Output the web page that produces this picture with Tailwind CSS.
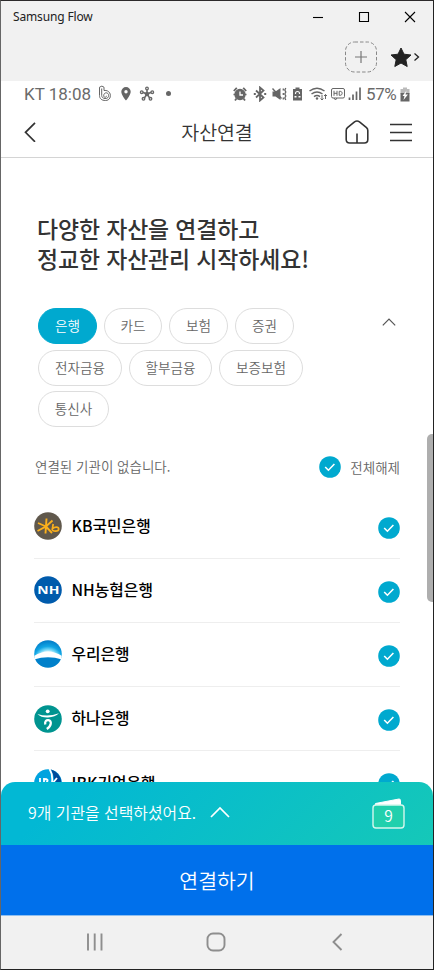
<!DOCTYPE html>
<html lang="ko">
<head>
<meta charset="utf-8">
<title>Samsung Flow</title>
<script src="https://cdn.jsdelivr.net/npm/@tailwindcss/browser@4"></script>
</head>
<body class="w-[434px] h-[970px] overflow-hidden bg-white font-['Noto_Sans_CJK_KR',sans-serif] text-[#666]">
<svg class="hidden">
  <symbol id="check" viewBox="0 0 22 22"><circle cx="11" cy="11" r="10.8" fill="#00a9cf"/><path d="M6.200 11l3.200 3.200 6-6.200" fill="none" stroke="#fff" stroke-width="1.600"/></symbol>
</svg>
<div class="relative flex flex-col w-[434px] h-[970px] border-t border-t-[#2c2a2b] border-l border-l-[#666] border-r border-r-[#222] border-b border-b-[#222] overflow-hidden">
  <div class="h-20 shrink-0 bg-[#f1f1f1]">
    <div class="h-8 flex items-center justify-between pl-3 pr-[17px]">
      <span class="font-['Noto_Sans',sans-serif] text-[12px] text-[#222] whitespace-nowrap tracking-[-0.15px]">Samsung Flow</span>
      <svg class="w-[104px] h-3" viewBox="0 0 104 12" fill="none" stroke="#000" stroke-width="1.1"><path d="M1 6.500h10"/><path d="M47.500 1.500h9v9h-9z"/><path d="M93 1l10 10M103 1L93 11"/></svg>
    </div>
    <div class="h-12 flex items-center justify-end pr-[11px]">
      <svg class="w-[78px] h-8" viewBox="0 0 78 32" fill="none"><rect x="1.500" y="1" width="31" height="30" rx="9" stroke="#888" stroke-dasharray="3.500 2"/><path d="M11 16h12M17 10v12" stroke="#777" stroke-width="1.200"/><path d="M57 7l3 6.200 7 .8-5.200 4.700 1.400 6.800-6.200-3.500-6.200 3.500 1.400-6.800-5.200-4.700 7-.8z" fill="#222" stroke="#222" stroke-linejoin="round"/><path d="M70.500 12.500l4 3.500-4 3.500" stroke="#222" stroke-width="1.300"/></svg>
    </div>
  </div>
  <div class="h-[26px] shrink-0 flex items-center justify-between pl-[23px] pr-[23px] font-[Roboto,sans-serif] text-[#6a6a6a]">
    <div class="flex items-center">
      <span class="text-[17px] leading-6 w-[74px] whitespace-nowrap">KT 18:08</span>
      <svg class="w-[76px] h-[18px]" viewBox="0 0 76 18" fill="none" stroke="#666">
        <path d="M1.500 2.200q2.500-2.200 4.500 0v3.300c8-1 8.500 10 1.500 10-4 0-6-2-6-5z"/><path d="M3.700 3.500v7c0 4 7 4 7 .3 0-4-5-4-5 0 0 2 2.800 2 2.800 0"/>
        <path d="M28 2a4.700 4.700 0 0 0-4.700 4.700C23.300 10 28 15.500 28 15.500S32.700 10 32.700 6.700A4.700 4.700 0 0 0 28 2zm0 3a1.700 1.700 0 1 1 0 3.400 1.700 1.700 0 0 1 0-3.400z" fill="#666" stroke="none"/>
        <path d="M49 9.500V4M49 9l-5-2M49 9l5-2M49 9l-3 4.500M49 9l3 4.500" stroke-width="1.500"/><circle cx="49" cy="9" r="1.800" fill="#666"/><g fill="#fff" stroke-width="1.300"><circle cx="49" cy="3.500" r="1.300"/><circle cx="43.700" cy="7.200" r="1.300"/><circle cx="54.300" cy="7.200" r="1.300"/><circle cx="45.500" cy="13.800" r="1.300"/><circle cx="52.500" cy="13.800" r="1.300"/></g>
        <circle cx="70.500" cy="8.500" r="2.500" fill="#666" stroke="none"/>
      </svg>
    </div>
    <div class="flex items-center">
      <svg class="w-[132px] h-4 mr-[3px]" viewBox="0 0 132 16" fill="none" stroke="#666" stroke-width="1.300">
        <circle cx="9" cy="8.500" r="5" fill="#666"/><path d="M9 5.500v3.500h3" stroke="#fff"/><path d="M2.800 5l3-3.200M15.200 5l-3-3.200M5.500 12.500L4 14.500M12.500 12.500l1.500 2" stroke-width="1.800"/><path d="M2.500 8.500h2M13.500 8.500h2"/>
        <path d="M25 4.500l7.500 7-3.500 3V1.500l3.500 3-7.500 7" stroke-width="1.800"/><path d="M22.800 8h2M33.200 8h2" stroke-width="2"/>
        <path d="M41.500 5.500h3L49.500 2v12l-5-3.500h-3z" fill="#666" stroke="none"/><path d="M41.500 2.500l9 10" stroke-width="1.400"/><path d="M52.300 2.500v2M52.300 7v2M52.300 11.500v2M54.800 2l-1 2 1 2-1 2 1 2-1 2 1 2" stroke-width="1.300"/>
        <path d="M64.500 1.500h4V3h2.500v11.500h-9V3h2.500z" fill="#666" stroke="none"/><path d="M64.500 8v-.5a2 2 0 0 1 4 0V8" stroke="#fff" stroke-width="1.100"/><path d="M63.500 10.800h2M67.500 10.800h2" stroke="#fff" stroke-width="1.500"/>
        <path d="M78.500 5q7.500-5.500 15 0M80.500 8q5.500-4 11 0M83 10.700q3-2.200 6 0" stroke-width="1.500"/><circle cx="86" cy="12.500" r="1.200" fill="#666" stroke="none"/><path d="M91 9v5M89.500 12.500l1.500 1.500 1.500-1.500M94.500 13V8.500M93 10l1.500-1.500L96 10" stroke-width="1"/>
        <rect x="100.500" y="2.500" width="13" height="9.500" rx="1.500" stroke-width="1"/><path d="M103 4.800v5M106 4.800v5M103 7.300h3M108.200 5.300v4h1c2.600 0 2.600-4 0-4zM103 12l1.500 2 1.500-2" stroke-width="1"/>
        <path d="M118.500 14v-2.500M122 14V8.500M125.500 14V5.500M129 14V1.500" stroke-width="1.700"/>
      </svg>
      <span class="text-[17px] leading-6 w-[34px] tracking-[-0.400px] whitespace-nowrap">57%</span>
      <svg class="w-[10px] h-[15px]" viewBox="0 0 10 15"><path d="M3 .5h4V2h2.500v5h-9V2H3z" fill="#bbb"/><path d="M.5 6h9v8.500h-9z" fill="#666"/><path d="M6.500 3.500L2.500 9h2l-1 4L8 7.500H5.500z" fill="#fff"/></svg>
    </div>
  </div>
  <header class="h-[51px] shrink-0 grid grid-cols-[1fr_auto_1fr] items-center border-b border-[#d4d4d4] pl-[23px] pr-[20px] text-[#333]">
    <svg class="w-3 h-5" viewBox="0 0 12 20" fill="none" stroke="#333" stroke-width="1.700"><path d="M11 .8L1.500 10.300 11 19.800"/></svg>
    <h1 class="text-[19.500px] font-[350] leading-8 tracking-[-0.1px] mr-[3px]">자산연결</h1>
    <div class="flex items-center justify-end gap-[21px]">
      <svg class="w-6 h-6" viewBox="0 0 24 24" fill="none" stroke="#333" stroke-width="1.600"><path d="M1.200 10.500Q1.200 8.800 2.500 7.600L9.500 1.800q2.500-1.600 5 0l7 5.800q1.300 1.200 1.300 2.900v9q0 3.500-3.500 3.500H4.700q-3.500 0-3.500-3.500zM12 23v-9.500"/></svg>
      <svg class="w-[23px] h-[19px]" viewBox="0 0 23 19" stroke="#333" stroke-width="1.600"><path d="M0 1.500h22M0 9.500h22M0 17.500h22"/></svg>
    </div>
  </header>
  <main class="flex-1 min-h-0 overflow-hidden pl-[33px] pr-[33px] pt-[55px]">
    <h2 class="pl-[3px] text-[22.900px] tracking-[-0.1px] font-medium leading-[30px] text-[#333] whitespace-nowrap">다양한 자산을 연결하고<br>정교한 자산관리 시작하세요!</h2>
    <div class="flex justify-between items-start mt-[35px] pl-1 pr-1">
      <div class="flex flex-wrap gap-x-[7px] gap-y-[5.500px] w-[280px] text-[13.600px] font-[350] [&>span]:h-9 [&>span]:flex [&>span]:items-center [&>span]:justify-center [&>span]:rounded-full [&>span]:border [&>span]:pb-[1px]">
        <span class="w-[59px] bg-[#00a9cf] border-[#00a9cf] text-white">은행</span>
        <span class="w-[58px] border-[#ddd]">카드</span>
        <span class="w-[59px] border-[#ddd]">보험</span>
        <span class="w-[59px] border-[#ddd]">증권</span>
        <span class="w-[84px] border-[#ddd]">전자금융</span>
        <span class="w-[83px] border-[#ddd]">할부금융</span>
        <span class="w-[84px] border-[#ddd]">보증보험</span>
        <span class="w-[71px] border-[#ddd]">통신사</span>
      </div>
      <svg class="w-[14px] h-2 mt-[10px]" viewBox="0 0 14 8" fill="none" stroke="#555" stroke-width="1.200"><path d="M.8 7.300L7 1l6.200 6.300"/></svg>
    </div>
    <div class="flex items-center justify-between h-6 mt-7 pl-px text-[13.500px] font-[350] whitespace-nowrap">
      <span class="pb-[2px]">연결된 기관이 없습니다.</span>
      <div class="flex items-center gap-[9px]"><svg class="w-[22px] h-[22px]"><use href="#check"/></svg><span>전체해제</span></div>
    </div>
    <ul class="mt-[15.500px] text-[15.800px] font-medium text-black [&>li]:h-[64.200px] [&>li]:flex [&>li]:items-center [&>li]:border-b [&>li]:border-[#eee] [&_span]:flex-1 [&_span]:ml-[9.500px] [&_span]:pb-[1px]">
      <li>
        <svg class="w-7 h-7" viewBox="0 0 28 28" fill="none"><circle cx="14" cy="14" r="13.800" fill="#60584c"/><path d="M12.500 6.500l-1 15M4 11l8 3.500 6.500-6M3.500 19l8.500-4.500 6 6.500" stroke="#fbb01c" stroke-width="1.900"/><path d="M19.200 12l-1 5.500c0 2 6.500 2.300 6.500-.6 0-2.300-4-2.300-5.800-.5" stroke="#fbb01c" stroke-width="1.700"/></svg>
        <span>KB국민은행</span><svg class="w-[22px] h-[22px] mt-[3px]"><use href="#check"/></svg>
      </li>
      <li>
        <svg class="w-7 h-7" viewBox="0 0 28 28"><circle cx="14" cy="14" r="13.800" fill="#005bac"/><text x="3.300" y="17.700" fill="#fff" font-family="Open Sans, sans-serif" font-weight="700" font-size="10.600" textLength="22" lengthAdjust="spacingAndGlyphs">NH</text></svg>
        <span>NH농협은행</span><svg class="w-[22px] h-[22px] mt-[3px]"><use href="#check"/></svg>
      </li>
      <li>
        <svg class="w-7 h-7" viewBox="0 0 28 28"><defs><radialGradient id="dawn" cx=".5" cy=".75" r=".75"><stop offset=".4" stop-color="#fff"/><stop offset=".55" stop-color="#6fd5f6"/><stop offset=".7" stop-color="#10a5e4"/><stop offset="1" stop-color="#0078c5"/></radialGradient><clipPath id="disc"><circle cx="14" cy="14" r="13.800"/></clipPath></defs><g clip-path="url(#disc)"><path d="M0 0h28v28H0z" fill="url(#dawn)"/><path d="M0 16Q14 7 28 16v6H0z" fill="#fff"/><path d="M0 19.500q14-4.500 28 0v9H0z" fill="#0080ca"/></g></svg>
        <span>우리은행</span><svg class="w-[22px] h-[22px] mt-[3px]"><use href="#check"/></svg>
      </li>
      <li>
        <svg class="w-7 h-7" viewBox="0 0 28 28" fill="none"><circle cx="14" cy="14" r="13.800" fill="#009490"/><circle cx="13.700" cy="6.300" r="1.900" fill="#fff"/><path d="M3.500 9q10 3.500 21.500-.7-4 4-11 4.200T3.500 9z" fill="#fff"/><path d="M11.300 19.500c-.8-3.500 1.200-4.500 3-4.300 4 .5 3 6-1.500 8.800" stroke="#fff" stroke-width="2.300"/></svg>
        <span>하나은행</span><svg class="w-[22px] h-[22px] mt-[3px]"><use href="#check"/></svg>
      </li>
      <li>
        <svg class="w-7 h-7" viewBox="0 0 28 28" fill="none"><circle cx="14" cy="14" r="13.800" fill="#00a3df"/><path d="M17 .5a13.800 13.800 0 0 1 2 26Q23 12 17 .5z" fill="#004b9b"/><path d="M15.500 0q3.500 5 2.500 14M6 9v12M10 10q6 0 2 4 6 3-2 5zM18 15l5-6M18 14l5 6" stroke="#fff" stroke-width="1.800"/></svg>
        <span>IBK기업은행</span><svg class="w-[22px] h-[22px] mt-[3px]"><use href="#check"/></svg>
      </li>
    </ul>
  </main>
  <div class="h-[63px] shrink-0 bg-white">
    <div class="h-full rounded-t-[14px] bg-linear-[135deg,#02b8d4_15%,#15c8b8] flex items-center pl-[27px] pr-[28px] text-white">
      <span class="text-[15.900px] font-[350] pb-[2px] whitespace-nowrap">9개 기관을 선택하셨어요.</span>
      <svg class="w-5 h-3 ml-[14px] mr-auto -mt-[3px]" viewBox="0 0 20 12" fill="none" stroke="#fff" stroke-width="1.700"><path d="M1 11l9-9 9 9"/></svg>
      <svg class="w-[33px] h-[31px]" viewBox="0 0 33 31"><path d="M3.500 7V5.500L27 1q1.500 0 1.500 1.500V7z" fill="#fff" stroke="#fff"/><rect x="1" y="7" width="31" height="23" rx="3" fill="#21d0ad" stroke="#d5f7ed" stroke-width="1.400"/><text x="16.500" y="23.500" text-anchor="middle" fill="#fff" font-size="15.500" font-weight="350">9</text></svg>
    </div>
  </div>
  <button class="h-[71px] shrink-0 bg-[#0070eb] border-b border-[#8fbff0] text-white text-[20.500px] font-[350]">연결하기</button>
  <nav class="h-[53px] shrink-0 bg-[#f1f1f1] flex items-center pb-[2px]">
    <svg class="w-full h-6" viewBox="0 0 432 24" fill="none" stroke="#8e8e8e" stroke-width="1.900"><path d="M87 3.500v17M93.700 3.500v17M100.500 3.500v17"/><rect x="206.500" y="3.500" width="17" height="17" rx="5.500"/><path d="M340.500 4l-8 8 8 8"/></svg>
  </nav>
  <div class="absolute left-[426px] top-[433px] w-[6px] h-[168px] bg-[#aeaeae] rounded-l-[5px]"></div>
</div>
</body>
</html>
